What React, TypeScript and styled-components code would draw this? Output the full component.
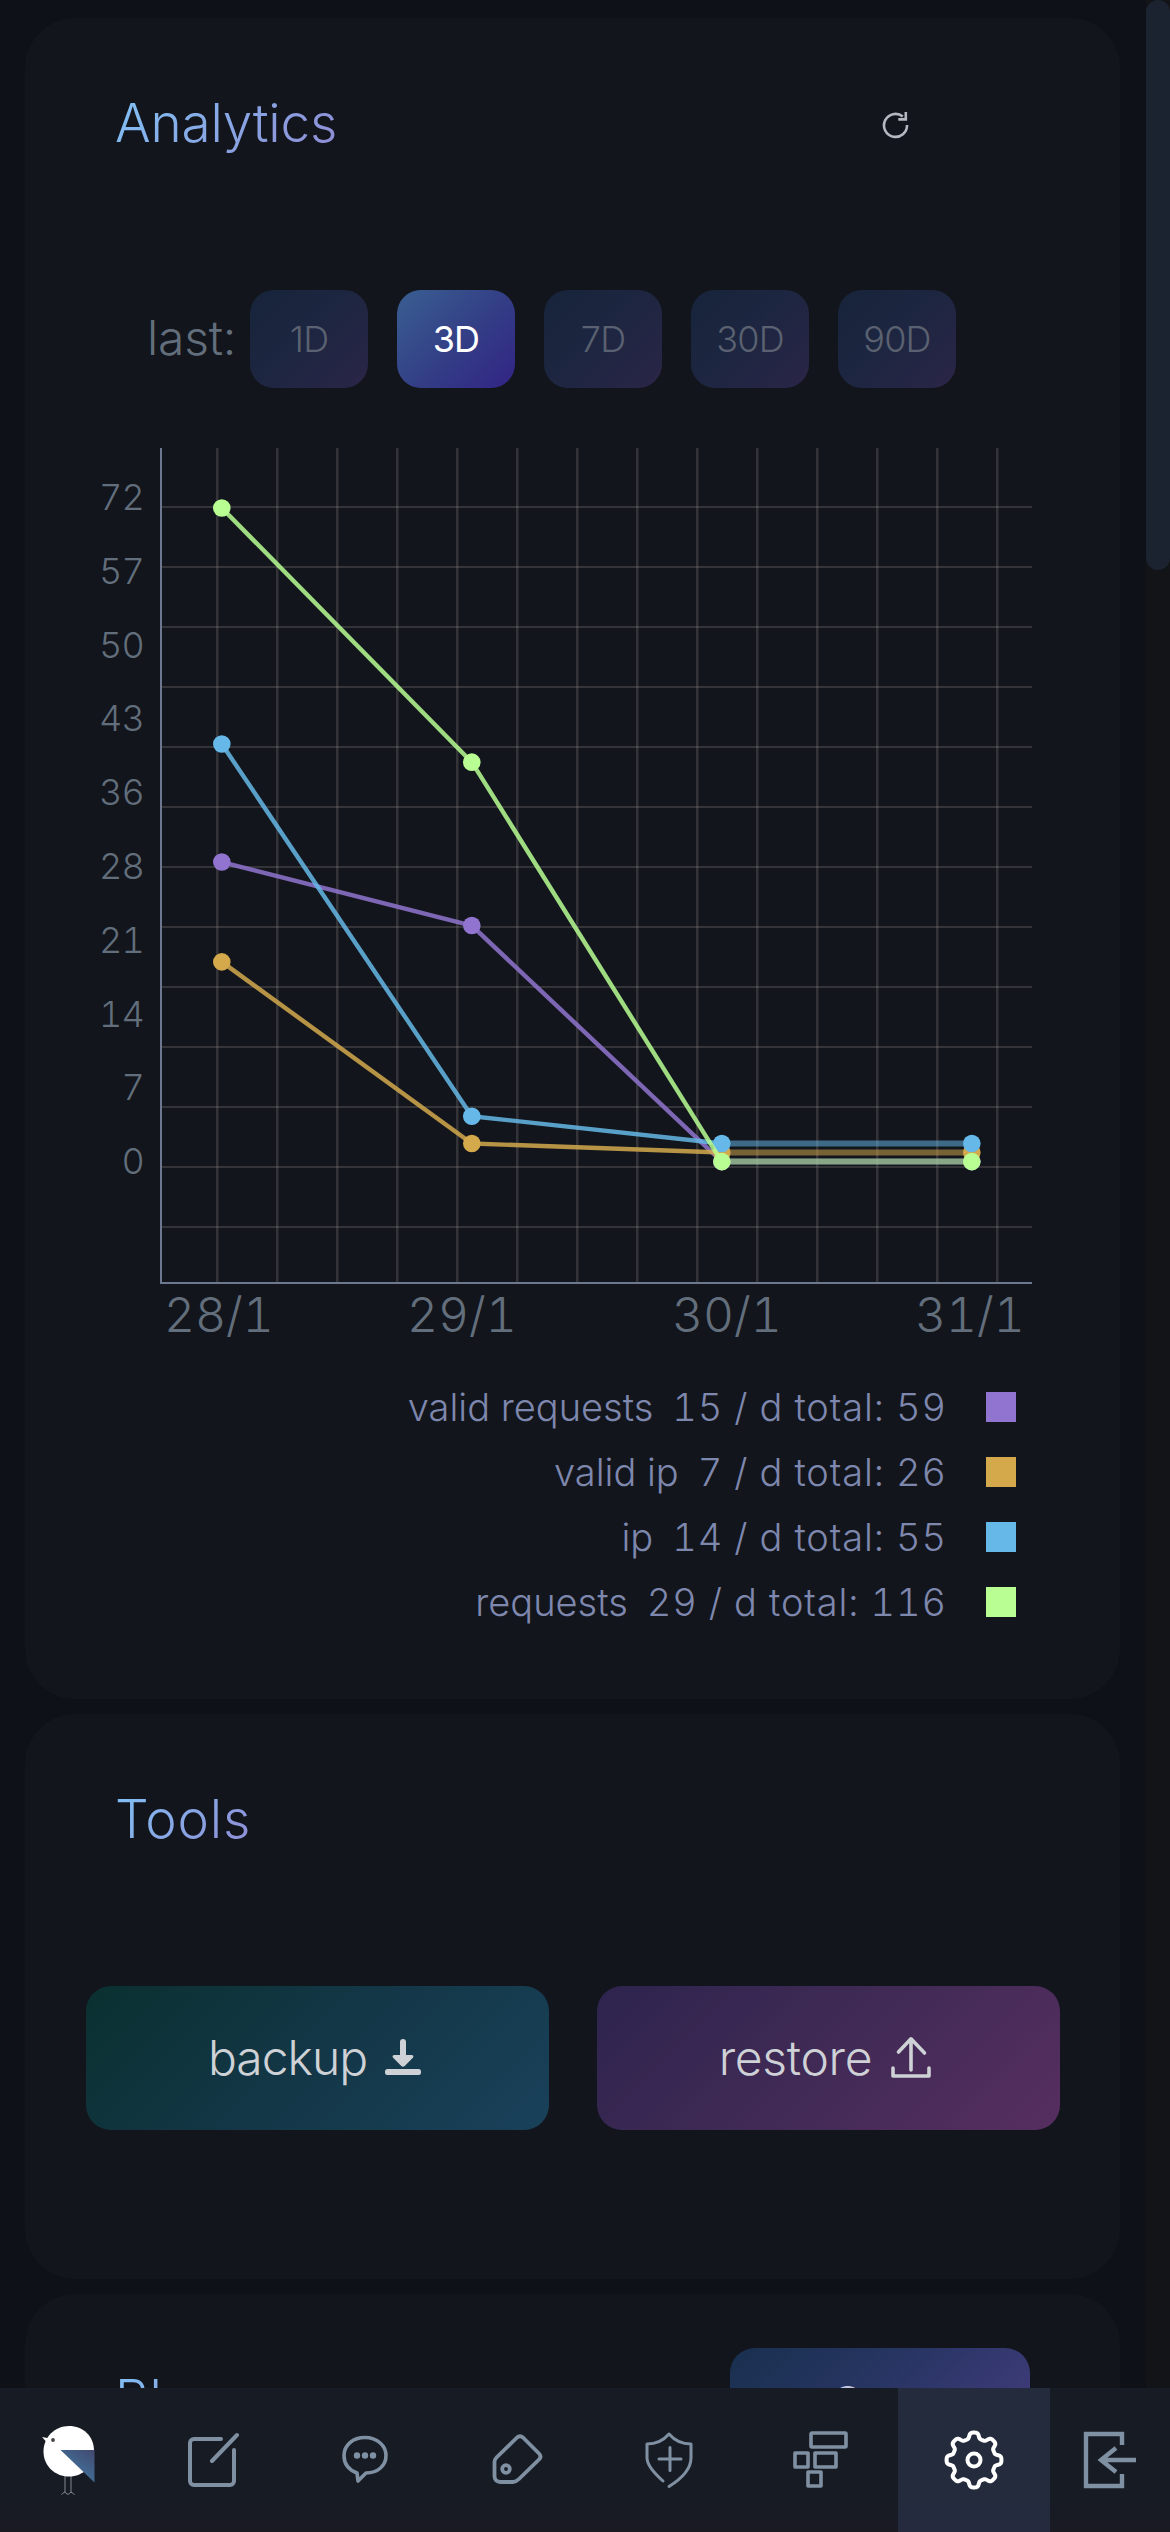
import React from "react";
import styled, { createGlobalStyle, css } from "styled-components";

const GlobalStyle = createGlobalStyle`
  *, *::before, *::after { box-sizing: border-box; }
  html, body { margin: 0; padding: 0; background: #0e1118; }
  body { font-family: Inter, "Liberation Sans", sans-serif; font-weight: 300; }
  button { font: inherit; border: 0; padding: 0; color: inherit; }
`;

const Screen = styled.div`
  display: flex;
  flex-direction: column;
  width: 1170px;
  height: 2532px;
  overflow: hidden;
  background: #0e1118;
`;

const Viewport = styled.div`
  display: flex;
  height: 2388px;
  overflow: hidden;
`;

const Content = styled.main`
  display: flex;
  flex-direction: column;
  gap: 15px;
  width: 1146px;
  padding: 18px 26px 0 25px;
`;

const Track = styled.div`
  width: 24px;
  background: #121417;
`;

const Thumb = styled.div`
  height: 570px;
  border-radius: 12px;
  background: #1b2330;
`;

const Card = styled.section<{ $height: number }>`
  flex: none;
  height: ${(p) => p.$height}px;
  border-radius: 50px;
  background: #12151c;
`;

const CardHead = styled.header`
  display: flex;
  justify-content: space-between;
  align-items: flex-start;
  padding: 54px 90px 0 90px;
  height: 272px;
`;

const Title = styled.h2<{ $spacing: number }>`
  margin: 19px 0 0;
  font-size: 53px;
  line-height: 64px;
  font-weight: 300;
  letter-spacing: ${(p) => p.$spacing}px;
  color: transparent;
  background: linear-gradient(135deg, #82bdf2 10%, #8f8ed6 95%);
  background-clip: text;
  -webkit-background-clip: text;
`;

const Refresh = styled.button`
  display: flex;
  margin: 40px 118px 0 0;
  background: none;
  color: #b5b8c0;
`;

const RangeRow = styled.div`
  display: flex;
  align-items: center;
  gap: 29px;
  height: 98px;
  padding-left: 122px;
`;

const RangeLabel = styled.span`
  width: 103px;
  margin-right: -29px;
  padding-bottom: 3px;
  font-size: 48px;
  letter-spacing: -0.2px;
  color: #626e7b;
`;

const RangeButton = styled.button<{ $active?: boolean }>`
  width: 118px;
  height: 98px;
  border-radius: 24px;
  font-size: 36px;
  letter-spacing: -0.8px;
  color: #5a6170;
  background: linear-gradient(135deg, #16243a, #1e2641 50%, #2a2547);
  ${(p) =>
    p.$active &&
    css`
      color: #fff;
      font-weight: 400;
      background: linear-gradient(135deg, #395f92, #333d85 55%, #322486);
    `}
`;

const ChartRow = styled.div`
  display: flex;
  padding: 60px 0 0 60px;
`;

const YAxis = styled.div`
  display: flex;
  flex-direction: column;
  width: 75px;
  padding: 13px 16px 0 0;
`;

const YLabel = styled.span`
  height: 73.8px;
  line-height: 73.8px;
  font-size: 36px;
  font-variant-numeric: tabular-nums;
  letter-spacing: -0.8px;
  text-align: right;
  color: #626e7b;
`;

const Plot = styled.div`
  width: 872px;
  height: 836px;
  border-left: 2px solid #6b7890;
  border-bottom: 2px solid #6b7890;
`;

const XAxis = styled.div`
  display: grid;
  grid-template-columns: 243px 265px 243px auto;
  padding-left: 139px;
  height: 62px;
`;

const XLabel = styled.span`
  font-size: 48px;
  line-height: 61px;
  font-variant-numeric: tabular-nums;
  color: #626e7b;
`;

const Legend = styled.ul`
  display: flex;
  flex-direction: column;
  margin: 0;
  padding: 28px 104px 0 0;
  list-style: none;
`;

const LegendItem = styled.li`
  display: flex;
  justify-content: flex-end;
  align-items: center;
  height: 65px;
  font-size: 38px;
  white-space: pre;
  color: #7e87ad;
`;

const LegendName = styled.span`
  margin-right: 19px;
`;

const LegendStats = styled.span`
  font-variant-numeric: tabular-nums;
  letter-spacing: 0.9px;
`;

const Swatch = styled.span<{ $color: string }>`
  width: 30px;
  height: 30px;
  margin-left: 39px;
  background: ${(p) => p.$color};
`;

const ToolRow = styled.div`
  display: flex;
  gap: 48px;
  padding: 0 60px 0 61px;
`;

const ToolButton = styled.button<{ $from: string; $to: string; $mid: string; $spacing: number }>`
  display: flex;
  align-items: center;
  justify-content: center;
  gap: 18px;
  flex: 1 1 0;
  height: 144px;
  padding: 0 6px 2px 0;
  border-radius: 25px;
  font-size: 48px;
  letter-spacing: ${(p) => p.$spacing}px;
  color: #ced1d5;
  background: linear-gradient(135deg, ${(p) => p.$from}, ${(p) => p.$mid}, ${(p) => p.$to});
`;

const SaveButton = styled.button`
  width: 300px;
  height: 110px;
  padding-left: 10px;
  border-radius: 25px;
  font-size: 48px;
  letter-spacing: -1px;
  color: #c3c6e2;
  background: linear-gradient(135deg, #19304f, #283563 45%, #453d80);
`;

const Nav = styled.nav`
  display: flex;
  height: 144px;
  background: linear-gradient(180deg, #171b23 80%, #1a1a23);
`;

const NavItem = styled.a<{ $width?: number; $active?: boolean }>`
  display: flex;
  align-items: center;
  justify-content: center;
  width: ${(p) => p.$width ?? 152}px;
  padding-right: ${(p) => (p.$width || p.$active ? 0 : 2)}px;
  color: ${(p) => (p.$active ? "#fff" : "#8090a3")};
  background: ${(p) => (p.$active ? "linear-gradient(180deg, #232b3d 80%, #262a3f)" : "none")};
`;

const X_START = 59.8;
const X_STEP = 250;
const ZERO_Y = 713.6;
const UNIT = 9.078;

const series = [
  { name: "valid requests", stats: "15 / d total: 59", color: "#9074cf", values: [33, 26, 0, 0] },
  { name: "valid ip", stats: "7 / d total: 26", color: "#d3a94c", values: [22, 2, 1, 1] },
  { name: "ip", stats: "14 / d total: 55", color: "#66b8e8", values: [46, 5, 2, 2] },
  { name: "requests", stats: "29 / d total: 116", color: "#b9fe92", values: [72, 44, 0, 0] },
];

const px = (i: number) => X_START + i * X_STEP;
const py = (v: number) => ZERO_Y - v * UNIT;

const ChartSvg = styled.svg`
  display: block;
`;

function Chart() {
  return (
    <ChartSvg width="870" height="834" viewBox="0 0 870 834">
      <g fill="#8c8680" fillOpacity="0.28">
        {Array.from({ length: 14 }, (_, i) => (
          <rect key={"v" + i} x={54 + i * 60} y="0" width="2.5" height="834" />
        ))}
        {Array.from({ length: 13 }, (_, i) => (
          <rect key={"h" + i} x="0" y={58 + i * 60} width="870" height="2" />
        ))}
      </g>
      {series.map((s) => (
        <g key={s.name} stroke={s.color} fill={s.color}>
          {s.values.slice(1).map((v, i) => {
            const flat = v === s.values[i];
            return (
              <line
                key={i}
                x1={px(i)}
                y1={py(s.values[i])}
                x2={px(i + 1)}
                y2={py(v)}
                strokeWidth={flat ? 6 : 4.4}
                strokeOpacity={flat ? 0.52 : 0.85}
              />
            );
          })}
          {s.values.map((v, i) => (
            <circle key={i} cx={px(i)} cy={py(v)} r="8.8" stroke="none" />
          ))}
        </g>
      ))}
    </ChartSvg>
  );
}

const line = { fill: "none", stroke: "currentColor", strokeLinecap: "round", strokeLinejoin: "round" } as const;

const RefreshIcon = () => (
  <svg width="30" height="30" viewBox="0 0 30 30" {...line} strokeWidth="2.6" strokeLinecap="butt" strokeLinejoin="miter">
    <path d="M25 13A11.500 11.500 0 1 1 20.800 4.500" />
    <path d="M23.800 0v7.400h-7.500" />
  </svg>
);

const DownloadIcon = () => (
  <svg width="36" height="38" viewBox="0 0 36 38" fill="currentColor">
    <path d="M18 1a3 3 0 0 1 3 3v13h5.500c2 0 2.500 1.600 1.400 2.800l-8.200 8.300c-1 1-2.400 1-3.400 0l-8.200-8.300c-1.100-1.200-.6-2.800 1.400-2.800H15V4a3 3 0 0 1 3-3z" />
    <rect x="0" y="31" width="36" height="6" rx="2.500" />
  </svg>
);

const UploadIcon = () => (
  <svg width="42" height="42" viewBox="0 0 42 42" {...line} strokeWidth="3.600">
    <path d="M21 34V3M8.500 16 21 2.800 34.500 17M3 32v8h36v-8" />
  </svg>
);

const BirdIcon = () => (
  <svg width="54" height="72" viewBox="0 0 54 72">
    <defs>
      <linearGradient id="wing" x1="1" y1="0" x2="0.4" y2="0.8">
        <stop offset="0" stopColor="#42486f" />
        <stop offset="1" stopColor="#41749c" />
      </linearGradient>
    </defs>
    <g stroke="#85888e" strokeWidth="1" fill="none">
      <path d="M23 52v17M29 52v17M19.500 70.500l3-2.500 3.500 2.500 3-2.500 3.500 2.500" />
    </g>
    <path d="M0 13l8 1.500-4 3z" fill="#fff" />
    <path d="M52 27C52 12 41 2 27 2S1.500 13 1.500 27.500 13 52.500 27 52.500 52 42 52 27z" fill="#fff" />
    <circle cx="11" cy="16" r="1.900" fill="#444" />
    <path d="M18.500 26H52.500V58.500z" fill="url(#wing)" />
  </svg>
);

const EditIcon = () => (
  <svg width="52" height="56" viewBox="0 0 52 56" {...line} strokeWidth="4">
    <path d="M34 7H7a4 4 0 0 0-4 4v38a4 4 0 0 0 4 4h36a4 4 0 0 0 4-4V18M25 29 50 3" />
  </svg>
);

const ChatIcon = () => (
  <svg width="46" height="52" viewBox="0 0 46 52" {...line} strokeWidth="3.600">
    <path d="M15 39C7 36 2 30 2 21.500 2 11 11 3.500 23 3.500s21 8 21 18S36 39 24 39l-8 8z" />
    <g fill="currentColor" stroke="none">
      <circle cx="15" cy="21.500" r="3.200" />
      <circle cx="23" cy="21.500" r="3.200" />
      <circle cx="31" cy="21.500" r="3.200" />
    </g>
  </svg>
);

const TagIcon = () => (
  <svg width="52" height="52" viewBox="0 0 52 52" {...line} strokeWidth="3.800">
    <path d="M3.500 28c0-2 .5-3 2-4.500L26 3.500c2-1.800 4-1.800 6 0l16 16c2 2 2 4 0 6L28 45c-2 2-3 3-6 3H9.500c-4 0-6-2-6-6z" />
    <circle cx="15" cy="35" r="3.800" />
  </svg>
);

const ShieldIcon = () => (
  <svg width="48" height="62" viewBox="0 0 48 62" {...line} strokeWidth="3">
    <path d="M18 52C9 44 2 36 2 29V15c9 0 16-3 22-10 6 7 13 10 22 10v14c0 11-10 21-22 28.500" />
    <path d="M25 18.500v23M14 30h22" />
  </svg>
);

const BlocksIcon = () => (
  <svg width="56" height="64" viewBox="0 0 56 64" {...line} strokeWidth="3.600">
    <rect x="18" y="5" width="35" height="14" rx="1" />
    <rect x="2" y="25" width="13" height="14" />
    <rect x="22" y="25" width="21" height="14" />
    <rect x="15" y="44" width="13" height="14" />
  </svg>
);

const gearPath = (() => {
  const points: string[] = [];
  for (let i = 0; i <= 160; i++) {
    const a = (i / 160) * Math.PI * 2;
    const wave = Math.tanh(2.2 * Math.cos(8 * a));
    const r = 24.5 + 3 * wave;
    points.push(`${(30 + r * Math.cos(a)).toFixed(2)} ${(30 + r * Math.sin(a)).toFixed(2)}`);
  }
  return "M" + points.join("L") + "Z";
})();

const GearIcon = () => (
  <svg width="60" height="60" viewBox="0 0 60 60" {...line} strokeWidth="4">
    <path d={gearPath} />
    <circle cx="30" cy="30" r="6.500" />
  </svg>
);

const ExitIcon = () => (
  <svg width="54" height="58" viewBox="0 0 54 58" fill="none" stroke="currentColor" strokeWidth="4.400">
    <path d="M39 14V3H3v52h36V43M53 29H18M33 17 18 29l15 12" />
  </svg>
);

export default function App() {
  return (
    <Screen>
      <GlobalStyle />
      <Viewport>
        <Content>
          <Card $height={1681}>
            <CardHead>
              <Title $spacing={-0.2}>Analytics</Title>
              <Refresh aria-label="refresh">
                <RefreshIcon />
              </Refresh>
            </CardHead>
            <RangeRow>
              <RangeLabel>last:</RangeLabel>
              {["1D", "3D", "7D", "30D", "90D"].map((r) => (
                <RangeButton key={r} $active={r === "3D"}>
                  {r}
                </RangeButton>
              ))}
            </RangeRow>
            <ChartRow>
              <YAxis>
                {[72, 57, 50, 43, 36, 28, 21, 14, 7, 0].map((n) => (
                  <YLabel key={n}>{n}</YLabel>
                ))}
              </YAxis>
              <Plot>
                <Chart />
              </Plot>
            </ChartRow>
            <XAxis>
              {["28/1", "29/1", "30/1", "31/1"].map((d) => (
                <XLabel key={d}>{d}</XLabel>
              ))}
            </XAxis>
            <Legend>
              {series.map((s) => (
                <LegendItem key={s.name}>
                  <LegendName>{s.name}</LegendName>
                  <LegendStats>{s.stats}</LegendStats>
                  <Swatch $color={s.color} />
                </LegendItem>
              ))}
            </Legend>
          </Card>
          <Card $height={565}>
            <CardHead>
              <Title $spacing={0.8}>Tools</Title>
            </CardHead>
            <ToolRow>
              <ToolButton $spacing={-1} $from="#0b3030" $mid="#133747" $to="#19415a">
                backup <DownloadIcon />
              </ToolButton>
              <ToolButton $spacing={-0.3} $from="#2d244d" $mid="#412a56" $to="#562e60">
                restore <UploadIcon />
              </ToolButton>
            </ToolRow>
          </Card>
          <Card $height={565}>
            <CardHead>
              <Title $spacing={0}>Blog</Title>
              <SaveButton>Save</SaveButton>
            </CardHead>
          </Card>
        </Content>
        <Track>
          <Thumb />
        </Track>
      </Viewport>
      <Nav>
        <NavItem $width={138}><BirdIcon /></NavItem>
        <NavItem><EditIcon /></NavItem>
        <NavItem><ChatIcon /></NavItem>
        <NavItem><TagIcon /></NavItem>
        <NavItem><ShieldIcon /></NavItem>
        <NavItem><BlocksIcon /></NavItem>
        <NavItem $active><GearIcon /></NavItem>
        <NavItem $width={120}><ExitIcon /></NavItem>
      </Nav>
    </Screen>
  );
}
